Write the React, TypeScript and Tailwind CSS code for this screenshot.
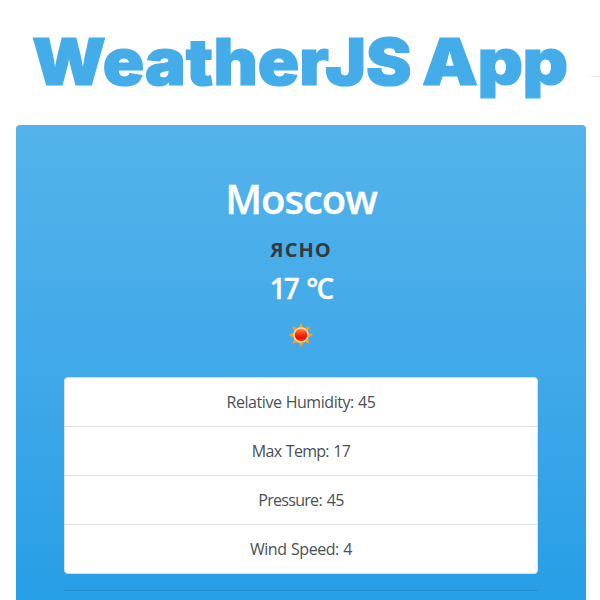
import React from "react";

const stats = [
  { text: "Relative Humidity: 45", cls: "tracking-[-0.45px] [word-spacing:0.5px]" },
  { text: "Max Temp: 17", cls: "tracking-[-0.75px] [word-spacing:1.2px]" },
  { text: "Pressure: 45", cls: "tracking-[-0.7px] [word-spacing:1.5px]" },
  { text: "Wind Speed: 4", cls: "tracking-[-0.45px] [word-spacing:0.8px]" },
];

function SunIcon() {
  return (
    <svg className="block" width="26" height="26" viewBox="0 0 26 26">
      <defs>
        <linearGradient id="sun" x1="0" y1="0" x2="0" y2="1">
          <stop offset="0" stopColor="#ff9a4a" />
          <stop offset="0.4" stopColor="#fb3a10" />
          <stop offset="0.7" stopColor="#f50800" />
          <stop offset="1" stopColor="#ff5a00" />
        </linearGradient>
      </defs>
      {[0, 45, 90, 135, 180, 225, 270, 315].map((a) => (
        <path key={a} d="M13 0.8 L16.4 7.5 H9.6 Z" fill="#f9a01f" transform={`rotate(${a} 13 13)`} />
      ))}
      <circle cx="13" cy="13" r="7" fill="url(#sun)" stroke="#fbd9b0" strokeWidth="1.5" />
    </svg>
  );
}

export default function App() {
  return (
    <div className="flex h-[600px] w-[600px] flex-col overflow-hidden bg-white font-['Open_Sans','Noto_Sans',sans-serif]">
      <header className="flex h-[125px] shrink-0 items-start pl-8">
        <h1 className="flex w-[553px] gap-[15px] whitespace-nowrap pt-[22px] font-['Inter',sans-serif] text-[65px] leading-[80px] font-black text-[#45acea] [-webkit-text-stroke:1.2px_#45acea]">
          <span className="w-[375px] origin-left scale-x-[1.053] tracking-normal">WeatherJS</span>
          <span className="origin-left scale-x-[1.085] tracking-[-0.5px]">App</span>
        </h1>
        <div className="mt-[76px] h-px flex-1 bg-linear-to-r from-white to-[#e0e0e0]" />
      </header>
      <main className="mr-[14px] ml-4 flex h-[530px] shrink-0 flex-col items-center rounded-[4px] bg-linear-to-b from-[#54b3eb] to-[#1f9ce6] px-12 pt-12 text-center">
        <h2 className="h-[56px] text-[40px] leading-[52px] font-semibold tracking-[-1px] text-white [-webkit-text-stroke:0.3px_white]">Moscow</h2>
        <h3 className="h-[42px] text-[20px] leading-[42px] font-bold tracking-[1px] text-[#343a40]">ЯСНО</h3>
        <h3 className="h-[36px] text-[28px] leading-[34px] font-semibold tracking-[-1.9px] text-white [word-spacing:3px] [-webkit-text-stroke:0.3px_white]">17 °C</h3>
        <div className="mt-[15px]">
          <SunIcon />
        </div>
        <ul className="mt-[29px] w-full shrink-0 divide-y divide-[#dfdfdf] rounded-[4px] border border-[#dfdfdf] bg-white text-[16px] leading-6 text-[#495057]">
          {stats.map((s) => (
            <li key={s.text} className="h-[49px] py-3 last:h-12">
              <span className={s.cls}>{s.text}</span>
            </li>
          ))}
        </ul>
        <hr className="mt-4 w-full border-0 border-t border-black/10" />
      </main>
    </div>
  );
}
